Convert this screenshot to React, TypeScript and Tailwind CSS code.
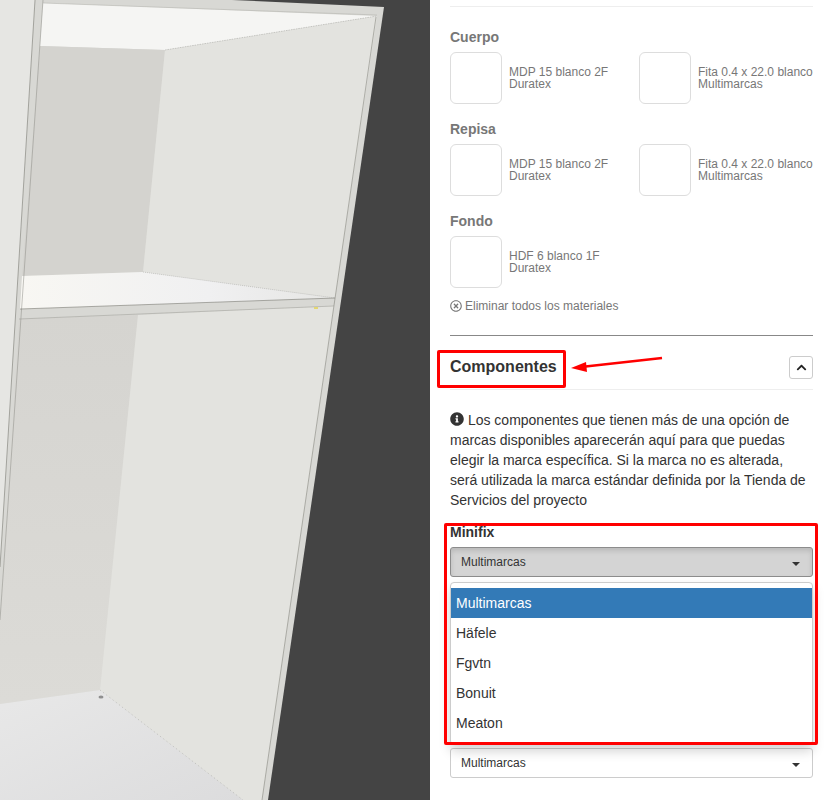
import { FaChevronUp, FaInfoCircle, FaRegTimesCircle } from "react-icons/fa";

function Scene() {
  return (
    <svg width="430" height="800" viewBox="0 0 430 800" className="block">
      <defs>
        <linearGradient id="floor" x1="0" y1="0" x2="1" y2="1">
          <stop offset="0" stopColor="#e8e8e8" />
          <stop offset="1" stopColor="#dcdcdd" />
        </linearGradient>
        <linearGradient id="shelf" x1="0" y1="0" x2="1" y2="0">
          <stop offset="0" stopColor="#f8f7f3" />
          <stop offset="0.6" stopColor="#f0f0f1" />
          <stop offset="1" stopColor="#e6e6e4" />
        </linearGradient>
        <linearGradient id="lowerBack" x1="0" y1="0" x2="0" y2="1">
          <stop offset="0" stopColor="#d5d4d0" />
          <stop offset="1" stopColor="#dcdbd7" />
        </linearGradient>
      </defs>
      <rect width="430" height="800" fill="#444444" />
      <polygon points="0,0 232,0 384,7 268,800 0,800" fill="#d8d8d4" />
      <polygon points="0,0 35,0 0,567" fill="#e6e6e3" />
      <polygon points="43,3 377,16 165,50 40,46" fill="#f5f5f3" />
      <polygon points="40,46 165,50 143,272 22,276" fill="#d4d3cf" />
      <polygon points="165,50 377,16 335,298 143,272" fill="#e3e3df" />
      <polygon points="22,276 143,272 335,298 20,309" fill="url(#shelf)" />
      <polygon points="19,319 138,315 100,690 0,704 0,620" fill="url(#lowerBack)" />
      <polygon points="138,315 334,306 262,800 243,800 100,690" fill="#e3e3df" />
      <polygon points="0,704 100,690 243,800 0,800" fill="url(#floor)" />
      <line x1="35" y1="0" x2="0" y2="567" stroke="#66665f" strokeWidth="0.5" />
      <line x1="43" y1="0" x2="0" y2="620" stroke="#8a8a85" strokeWidth="0.5" />
      <line x1="376" y1="17" x2="262" y2="800" stroke="#77776f" strokeWidth="0.5" />
      <line x1="43" y1="3" x2="377" y2="15" stroke="#b0b0ab" strokeWidth="0.5" />
      <line x1="20" y1="309" x2="335" y2="298" stroke="#66665f" strokeWidth="0.5" />
      <line x1="19" y1="319" x2="334" y2="306" stroke="#9a9a95" strokeWidth="0.5" />
      <line x1="165" y1="50" x2="377" y2="16" stroke="#a5a5a0" strokeWidth="0.5" strokeDasharray="1.5 1" />
      <line x1="143" y1="272" x2="335" y2="298" stroke="#a5a5a0" strokeWidth="0.5" strokeDasharray="1 1" />
      <line x1="100" y1="690" x2="243" y2="800" stroke="#9a9a95" strokeWidth="0.5" strokeDasharray="1 3" />
      <ellipse cx="101" cy="697" rx="2.5" ry="1.5" fill="#8f8f8f" />
      <rect x="314" y="307" width="4" height="2" fill="#e3d671" />
    </svg>
  );
}

function Material({ name, brand }: { name: string; brand: string }) {
  return (
    <div className="flex items-center w-[189px] shrink-0">
      <div className="w-[52px] h-[52px] rounded-md border border-[#dddddd] bg-white shrink-0" />
      <div className="ml-[7px] text-xs leading-3 text-[#777777] whitespace-nowrap">
        <div>{name}</div>
        <div>{brand}</div>
      </div>
    </div>
  );
}

function Caret() {
  return (
    <svg width="8" height="4" viewBox="0 0 8 4" className="shrink-0 mt-[3px]">
      <polygon points="0,0 8,0 4,4" fill="#333333" />
    </svg>
  );
}

function Group({ title, children }: { title: string; children: React.ReactNode }) {
  return (
    <div className="h-[92px]">
      <div className="h-[25px] flex items-start text-sm leading-5 font-bold text-[#777777]">{title}</div>
      <div className="flex">{children}</div>
    </div>
  );
}

export default function App() {
  return (
    <div
      className="relative w-[830px] h-[800px] overflow-hidden flex bg-white text-[#333333]"
      style={{ fontFamily: '"Liberation Sans", Arial, sans-serif' }}
    >
      <div className="w-[430px] h-[800px] shrink-0">
        <Scene />
      </div>
      <div className="w-[400px] shrink-0 pl-5 pr-[17px]">
        <div className="h-[6px] border-b border-[#eeeeee] box-content" />
        <div className="pt-[20px]">
          <Group title="Cuerpo">
            <Material name="MDP 15 blanco 2F" brand="Duratex" />
            <Material name="Fita 0.4 x 22.0 blanco" brand="Multimarcas" />
          </Group>
          <Group title="Repisa">
            <Material name="MDP 15 blanco 2F" brand="Duratex" />
            <Material name="Fita 0.4 x 22.0 blanco" brand="Multimarcas" />
          </Group>
          <Group title="Fondo">
            <Material name="HDF 6 blanco 1F" brand="Duratex" />
          </Group>
        </div>
        <div className="flex items-center gap-[3px] h-4 -mt-[5px] mb-[21px] text-xs text-[#777777]">
          <FaRegTimesCircle className="w-3 h-3" />
          <span>Eliminar todos los materiales</span>
        </div>
        <div className="border-t border-[#888888]" />
        <div className="h-[54px] pt-[9px] flex items-center justify-between border-b border-[#eeeeee]">
          <h3 className="text-base font-bold text-[#333333] -mt-px">Componentes</h3>
          <button className="w-6 h-[23px] flex items-center justify-center rounded-[3px] border border-[#cccccc] bg-white">
            <FaChevronUp className="w-[11px] h-[11px] text-[#222222]" />
          </button>
        </div>
        <p className="mt-5 text-sm leading-5 text-[#333333]">
          <FaInfoCircle className="inline w-[14px] h-[14px] align-[-1px]" /> Los componentes que tienen más de una opción de marcas disponibles
          aparecerán aquí para que puedas elegir la marca específica. Si la marca no es alterada, será utilizada la
          marca estándar definida por la Tienda de Servicios del proyecto
        </p>
        <div className="mt-[12px] text-sm leading-5 font-bold text-[#333333]">Minifix</div>
        <div className="mt-[5px] h-[30px] flex items-center justify-between pl-[10px] pr-[12px] rounded-[3px] border border-[#8c8c8c] bg-[#d4d4d4] shadow-[inset_0_3px_5px_rgba(0,0,0,0.125)] text-xs">
          <span>Multimarcas</span>
          <Caret />
        </div>
        <div className="mt-[171px] h-[30px] flex items-center justify-between pl-[10px] pr-[12px] rounded-[3px] border border-[#cccccc] bg-white text-xs">
          <span>Multimarcas</span>
          <Caret />
        </div>
      </div>

      <div className="absolute left-[450px] top-[582px] w-[363px] h-[163px] pt-[5px] rounded-[4px] border border-[#cccccc] bg-white shadow-[0_6px_12px_rgba(0,0,0,0.175)] text-sm">
        <div className="h-[30px] flex items-center px-[5px] bg-[#337ab7] text-white">Multimarcas</div>
        {["Häfele", "Fgvtn", "Bonuit", "Meaton"].map((x) => (
          <div key={x} className="h-[30px] flex items-center px-[5px] text-[#333333]">
            {x}
          </div>
        ))}
      </div>

      <div className="absolute left-[437px] top-[350px] w-[129px] h-[38px] border-[3px] border-[#ff0000] rounded-[2px]" />
      <div className="absolute left-[444px] top-[523px] w-[374px] h-[222px] border-[3px] border-[#ff0000] rounded-[2px]" />
      <svg className="absolute left-[565px] top-[350px]" width="105" height="25" viewBox="0 0 105 25">
        <line x1="97" y1="8" x2="16" y2="17" stroke="#ff0000" strokeWidth="2.5" />
        <polygon points="6,18 21,12 22,22" fill="#ff0000" />
      </svg>
    </div>
  );
}
